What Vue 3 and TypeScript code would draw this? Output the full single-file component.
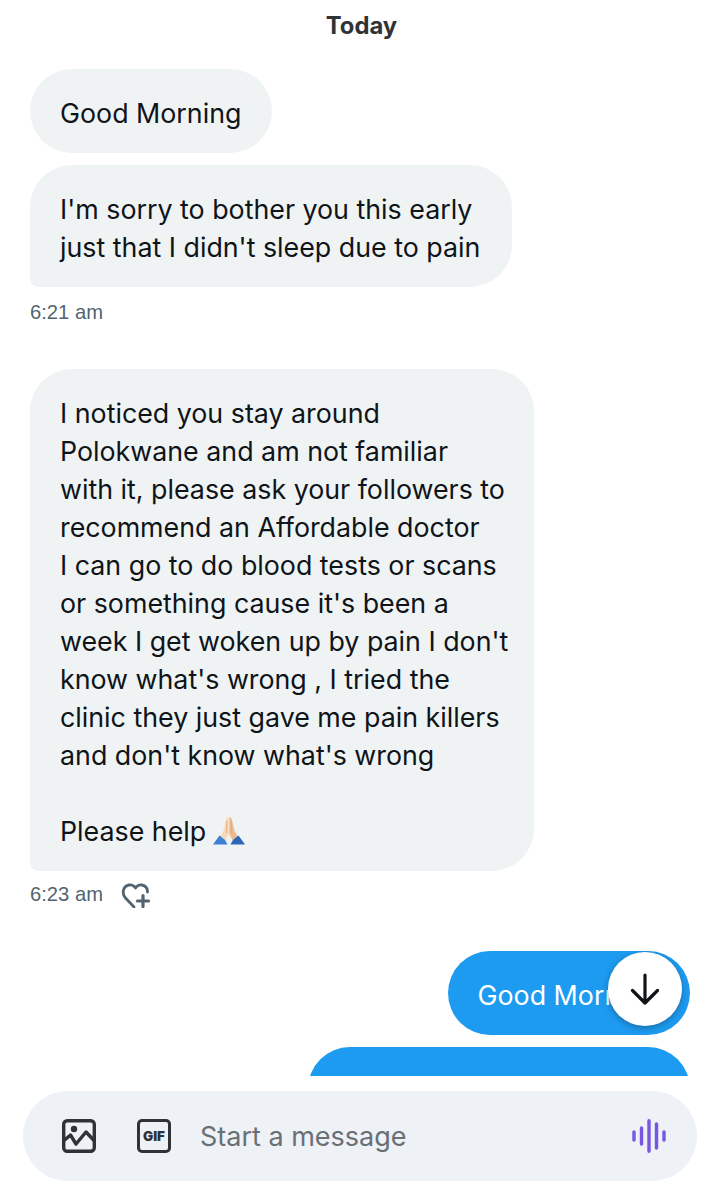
<script setup lang="ts">
import { ref } from 'vue';

interface Msg {
  id: number;
  text: string;
  kind?: string;
}

const firstGroup = ref<Msg[]>([
  { id: 1, text: 'Good Morning', kind: 'pill' },
  { id: 2, text: "I'm sorry to bother you this early\njust that I didn't sleep due to pain", kind: 'tail' },
]);

const longText = `I noticed you stay around
Polokwane and am not familiar
with it, please ask your followers to
recommend an Affordable doctor
I can go to do blood tests or scans
or something cause it's been a
week I get woken up by pain I don't
know what's wrong , I tried the
clinic they just gave me pain killers
and don't know what's wrong

Please help `;
</script>

<template>
  <div class="screen">
    <div class="thread">
      <div class="day">Today</div>

      <div class="group first">
        <div v-for="m in firstGroup" :key="m.id" :class="['bubble', m.kind]">{{ m.text }}</div>
        <div class="meta">6:21 am</div>
      </div>

      <div class="group second">
        <div class="bubble tail">{{ longText }}<svg class="pray" viewBox="0 0 34 30">
            <path d="M16.700 1c-1.500 0-2.300 1.200-2.600 2.700L11.500 15 6.500 23l5.500 4 4.700-9z" fill="#f8d9ba" />
            <path d="M17.300 1c1.500 0 2.300 1.200 2.600 2.700L22.500 15l5 8-5.500 4-4.700-9z" fill="#ecbc90" />
            <path d="M14.800 5v12M19.200 5v12" stroke="#d9a273" stroke-width=".8" fill="none" />
            <path d="M7.500 19.500 1 28.500h14.500L13 24z" fill="#3f7fd6" />
            <path d="M26.500 19.500l6.500 9H18.500L21 24z" fill="#2f66b5" />
          </svg></div>
        <div class="meta">
          <span>6:23 am</span>
          <svg class="react" viewBox="0 0 30 28" fill="none" stroke="#536471" stroke-width="2.800" stroke-linecap="round" stroke-linejoin="round">
            <path d="M13 27 4.500 18C.5 13.500 2 6 8 5c2.500-.4 5 .8 6.500 3 1.500-2.200 4-3.400 6.500-3 3.500.6 5.500 3 5.500 7" />
            <path d="M22 15.500v11M16.500 21h11" stroke-width="3.200" />
          </svg>
        </div>
      </div>

      <div class="group mine">
        <div class="bubble own pill">Good Morning</div>
        <div class="bubble own cut"></div>
      </div>

      <button class="scroll-down" aria-label="Scroll to bottom">
        <svg viewBox="0 0 32 32" fill="none" stroke="#0f1419" stroke-width="3.200" stroke-linecap="round" stroke-linejoin="round">
          <path d="M16 2v28M3.500 17.500 16 30l12.500-12.500" />
        </svg>
      </button>
    </div>

    <div class="composer">
      <svg class="tool" viewBox="0 0 34 34" fill="none" stroke="#2f3336" stroke-width="3.400" stroke-linejoin="round">
        <rect x="1.700" y="1.700" width="30.600" height="30.600" rx="3.500" />
        <path d="M2 21.500 8.500 16l5.500 9L24 13l8 8.500" />
        <circle cx="12" cy="10" r="3.200" fill="#2f3336" stroke="none" />
      </svg>
      <div class="gif"><span>GIF</span></div>
      <span class="placeholder">Start a message</span>
      <svg class="voice" viewBox="0 0 34 36" fill="none" stroke="#7856e3" stroke-width="3.400" stroke-linecap="round">
        <path d="M2 14v8M9.500 10v16M17 2.700v30.600M24.500 6v24M32 14v8" />
      </svg>
    </div>
  </div>
</template>

<style>
html,
body {
  background: #fff;
}
</style>

<style scoped>
.screen {
  width: 707px;
  height: 1196px;
  display: flex;
  flex-direction: column;
  background: #fff;
  font-family: Inter, Roboto, sans-serif;
  color: #0f1419;
  overflow: hidden;
}

.thread {
  position: relative;
  height: 1076px;
  padding: 0 17px 0 30px;
  overflow: hidden;
  flex: none;
}

.day {
  padding: 11px 0 0 3px;
  height: 69px;
  box-sizing: border-box;
  text-align: center;
  font-size: 23.800px;
  line-height: 30px;
  font-weight: 700;
  color: #2f3336;
}

.group {
  display: flex;
  flex-direction: column;
  gap: 12px;
  align-items: flex-start;
}

.first .tail {
  padding-right: 32px;
}

.second {
  margin-top: 44px;
}

.second .bubble {
  padding-right: 26px;
}

.second .meta {
  margin-top: -2px;
}

.mine {
  margin-top: 44px;
  align-items: flex-end;
}

.bubble {
  box-sizing: border-box;
  width: fit-content;
  padding: 25px 30px 21px;
  border-radius: 42px;
  background: #eff3f4;
  font-size: 26.800px;
  line-height: 38px;
  white-space: pre-line;
}

.bubble.pill {
  padding-right: 31px;
}

.bubble.tail {
  border-bottom-left-radius: 8px;
}

.own {
  background: #1d9bf0;
  color: #fff;
}

.cut {
  width: 382px;
  height: 84px;
}

.pray {
  width: 34px;
  height: 30px;
  margin-left: -2px;
  vertical-align: -5px;
}

.meta {
  display: flex;
  align-items: center;
  gap: 18px;
  height: 26px;
  font-family: "Liberation Sans", Arial, sans-serif;
  font-size: 20.200px;
  color: #536471;
}

.react {
  width: 30px;
  height: 28px;
}

.scroll-down {
  position: absolute;
  left: 608px;
  top: 952px;
  width: 74px;
  height: 74px;
  padding: 0;
  border: none;
  border-radius: 50%;
  background: #fff;
  box-shadow: 0 2px 6px rgba(15, 20, 25, 0.35);
  display: flex;
  align-items: center;
  justify-content: center;
}

.scroll-down svg {
  width: 32px;
  height: 32px;
}

.composer {
  flex: none;
  box-sizing: border-box;
  width: 674px;
  height: 90px;
  margin: 15px 0 0 23px;
  padding: 0 31px 0 39px;
  border-radius: 45px;
  background: #eef1f5;
  display: flex;
  align-items: center;
}

.tool {
  width: 34px;
  height: 34px;
  flex: none;
}

.gif {
  box-sizing: border-box;
  width: 34px;
  height: 34px;
  margin-left: 41px;
  border: 3.400px solid #2f3336;
  border-radius: 5px;
  display: flex;
  align-items: center;
  justify-content: center;
  flex: none;
}

.gif span {
  font-size: 13.500px;
  font-weight: 900;
  color: #2f3336;
}

.placeholder {
  margin-left: 29px;
  font-size: 27px;
  color: #687076;
  flex: 1;
}

.voice {
  width: 34px;
  height: 36px;
  flex: none;
}
</style>
